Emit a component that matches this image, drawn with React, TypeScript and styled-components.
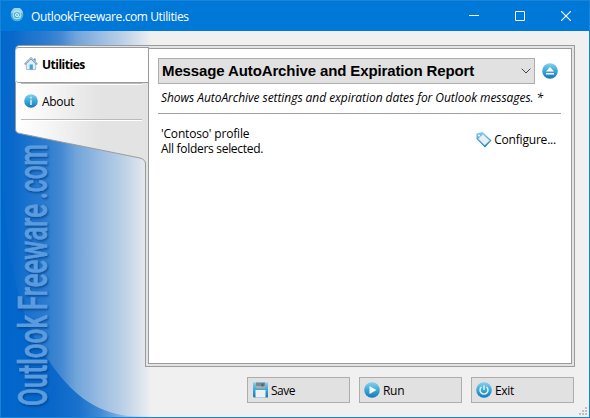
import React from "react";
import styled, { createGlobalStyle } from "styled-components";

const Global = createGlobalStyle`
  * { box-sizing: border-box; }
  body { margin: 0; background: #f0f0f0; font: 12px/15px "Open Sans", "Noto Sans", sans-serif; color: #000; }
`;

const Window = styled.div`
  position: relative;
  display: grid;
  grid-template-rows: 30px 1fr;
  width: 590px;
  height: 418px;
  border: 1px solid #1883d7;
  background: #f0f0f0;
  overflow: hidden;
`;

const TitleBar = styled.header`
  display: flex;
  align-items: center;
  background: #0078d7;
  color: #fff;
  padding-left: 9px;
  z-index: 1;
`;

const Label = styled.span<{ $track?: number; $bold?: boolean; $italic?: boolean }>`
  display: block;
  white-space: nowrap;
  letter-spacing: ${(p) => p.$track ?? 0}px;
  font-weight: ${(p) => (p.$bold ? 700 : 400)};
  font-style: ${(p) => (p.$italic ? "italic" : "normal")};
`;

const TitleText = styled(Label)`
  margin: 0 auto 0 7px;
`;

const CaptionButtons = styled.div`
  display: flex;
`;

const CaptionButton = styled.button`
  display: grid;
  place-items: center;
  width: 46px;
  height: 30px;
  padding: 0;
  border: 0;
  background: transparent;
`;

const Body = styled.div`
  display: grid;
  grid-template-rows: 322px 1fr;
  padding-top: 14px;
`;

const Main = styled.main`
  display: grid;
  grid-template-columns: 144px 430px;
`;

const Artwork = styled.svg`
  position: absolute;
  left: -1px;
  top: -1px;
  pointer-events: none;
`;

const Tabs = styled.nav`
  position: relative;
  padding: 2px 0 0 15px;
  z-index: 2;
`;

const Tab = styled.a<{ $active?: boolean }>`
  display: flex;
  align-items: center;
  gap: 4px;
  width: 133px;
  height: ${(p) => (p.$active ? 36 : 34)}px;
  padding: 0 0 2px 8px;
  border: solid #9b9b9b;
  border-width: ${(p) => (p.$active ? "1px 1px 1px 0" : "0")};
  border-radius: 3px 0 0 3px;
  background: ${(p) => (p.$active ? "#fff" : "transparent")};
`;

const TabDivider = styled.hr`
  width: 121px;
  height: 2px;
  margin: 0 0 0 5px;
  border: 0;
  background: linear-gradient(#bababa 50%, #fff 50%);
`;

const Panel = styled.section`
  position: relative;
  z-index: 1;
  border: 1px solid #9b9b9b;
  padding: 2px;
  background: #e3e3e3;
`;

const PanelInner = styled.div`
  height: 100%;
  border: 1px solid #9b9b9b;
  background: #fff;
  padding: 9px 9px 0;
`;

const TabPlate = styled(Artwork)`
  z-index: 1;
`;

const ReportRow = styled.div`
  display: flex;
  align-items: center;
  gap: 7px;
`;

const Combo = styled.div`
  display: flex;
  align-items: center;
  justify-content: space-between;
  width: 377px;
  height: 26px;
  padding: 0 3px;
  border: 1px solid #adadad;
  background: #e1e1e1;
  font: 15px/20px "Liberation Sans", Arial, sans-serif;
`;

const Description = styled.div`
  height: 29px;
  padding: 6px 0 0 3px;
`;

const Rule = styled.hr`
  width: 403px;
  height: 1px;
  margin: 0;
  border: 0;
  background: #a0a0a0;
`;

const Details = styled.div`
  display: flex;
  justify-content: space-between;
  padding: 12px 6px 0 3px;
`;

const Action = styled.a`
  display: flex;
  gap: 2px;
  height: 16px;
  margin-top: 6px;
`;

const Footer = styled.footer`
  display: flex;
  gap: 9px;
  padding: 10px 0 0 246px;
  z-index: 1;
`;

const PushButton = styled.button`
  display: flex;
  align-items: center;
  gap: 3px;
  width: 103px;
  height: 26px;
  padding: 0 0 0 4px;
  border: 1px solid #adadad;
  background: #e1e1e1;
  color: #000;
  font: inherit;
`;

const Grip = styled.svg`
  position: absolute;
  right: 1px;
  bottom: 1px;
`;

const BRAND = [
  { word: "Outlook", start: 406, length: 91 },
  { word: "Freeware", start: 310, length: 106 },
  { word: ".com", start: 199, length: 55 },
];

const Backdrop = () => (
  <Artwork width="590" height="418" viewBox="0 0 590 418">
    <defs>
      <linearGradient id="fade" gradientUnits="userSpaceOnUse" x1="0" x2="152" y1="0" y2="0">
        <stop offset="0" stopColor="#0366cb" />
        <stop offset=".09" stopColor="#0969cb" />
        <stop offset=".18" stopColor="#1a72ce" />
        <stop offset=".3" stopColor="#2b7bd0" />
        <stop offset=".4" stopColor="#4388d2" />
        <stop offset=".5" stopColor="#70a4da" />
        <stop offset=".66" stopColor="#9abce1" />
        <stop offset=".8" stopColor="#b9cfe6" />
        <stop offset=".95" stopColor="#e2e8ee" />
        <stop offset="1" stopColor="#f0f0f0" />
      </linearGradient>
      <linearGradient id="deep" gradientUnits="userSpaceOnUse" x1="0" x2="152" y1="0" y2="0">
        <stop offset="0" stopColor="#0066cc" />
        <stop offset=".35" stopColor="#0967ca" />
        <stop offset=".52" stopColor="#1b72cd" />
        <stop offset=".66" stopColor="#408ad3" />
        <stop offset=".82" stopColor="#91b8e0" />
        <stop offset="1" stopColor="#f0f0f0" />
      </linearGradient>
      <filter id="shade" x="-10%" y="-10%" width="120%" height="120%">
        <feDropShadow dx="1" dy="1.5" stdDeviation="1" floodColor="#003b80" floodOpacity=".75" />
      </filter>
    </defs>
    <rect x="1" y="31" width="151" height="386" fill="url(#fade)" />
    <path d="M1 150Q4 232 16 285C24 318 36 345 49 361C70 392 94 412 128 416H152V417H1Z" fill="url(#deep)" />
    <g
      filter="url(#shade)"
      fontFamily="Roboto, sans-serif"
      fontSize="41"
      fontWeight="500"
      fill="#5a9ce0"
      stroke="#5a9ce0"
      strokeWidth=".6"
    >
      {BRAND.map(({ word, start, length }) => (
        <text
          key={word}
          transform={`translate(46.500 ${start}) rotate(-90)`}
          textLength={length}
          lengthAdjust="spacingAndGlyphs"
        >
          {word}
        </text>
      ))}
    </g>
  </Artwork>
);

const TabShape = () => (
  <TabPlate width="590" height="418" viewBox="0 0 590 418">
    <defs>
      <linearGradient id="tabs" gradientUnits="userSpaceOnUse" x1="16" x2="100" y1="0" y2="0">
        <stop offset="0" stopColor="#fff" />
        <stop offset=".3" stopColor="#f8f8f8" />
        <stop offset="1" stopColor="#e3e3e3" />
      </linearGradient>
    </defs>
    <path
      d="M148 45.5H20Q15.500 45.500 15.500 50V129Q15.500 133 20 133.500L140 158Q145.500 159.500 145.500 164H148Z"
      fill="url(#tabs)"
    />
    <path
      d="M148 45.5H20Q15.500 45.500 15.500 50V129Q15.500 133 20 133.500L140 158Q145.500 159.500 145.500 164"
      fill="none"
      stroke="#9b9b9b"
    />
    <path d="M148.500 47V166" stroke="#9b9b9b" />
    <path d="M16 50V82" stroke="#a5d2f3" strokeWidth="2" />
  </TabPlate>
);

const BallGradient = ({ id }: { id: string }) => (
  <defs>
    <linearGradient id={id} x2="0" y2="1">
      <stop stopColor="#86d0ec" />
      <stop offset=".5" stopColor="#3ca7d8" />
      <stop offset="1" stopColor="#1478b5" />
    </linearGradient>
  </defs>
);

const Ball = ({ id, children, size = 16 }: { id: string; children: React.ReactNode; size?: number }) => (
  <svg width={size} height={size} viewBox="0 0 16 16" fill="none">
    <BallGradient id={id} />
    <circle cx="8" cy="8" r="7.800" fill={`url(#${id})`} />
    {children}
  </svg>
);

const AppIcon = () => (
  <svg width="14" height="16" viewBox="0 0 14 16" fill="none">
    <circle cx="7" cy="7" r="6.300" fill="#4fb3d6" />
    <path d="M1 5.500a6 6 0 0 1 12 0Q7 2.500 1 5.500" fill="#9bd6e6" />
    <circle cx="7" cy="7" r="3.900" stroke="#c3e6f0" />
    <circle cx="7" cy="7" r="1.500" stroke="#e0f3f8" />
    <path d="M8.600 6v2.500q1.500.8 2.300-1" stroke="#c3e6f0" />
  </svg>
);

const HomeIcon = () => (
  <svg width="14" height="14" viewBox="0.500 1 15 15">
    <path d="M3 8V14.500H13V8L8 3Z" fill="#e5edf3" stroke="#a6b6c2" />
    <path d="M11 2.500h2V6l-2-2Z" fill="#7895a8" />
    <path d="M1.300 9 8 2.300 14.700 9" fill="none" stroke="#7b9bb4" strokeWidth="1.800" />
    <path d="M2 8 8 2l6 6" fill="none" stroke="#b4cfe2" />
    <path d="M6.500 9h3.500v5.500H6.500Z" fill="#36a7dc" />
  </svg>
);

const TagIcon = () => (
  <svg width="16" height="16" viewBox="0 0 16 16">
    <BallGradient id="tag" />
    <path d="M.5 1.500 6.500 0 15.500 8.500 9 15.500.5 7Z" fill="url(#tag)" />
    <path d="M6.800 2.200 13.700 8.600 8.700 13.300 2.200 6.700Z" fill="#e8eef1" stroke="#b4c9d3" strokeWidth=".5" />
    <circle cx="3" cy="3.400" r="1" fill="#fff" />
  </svg>
);

const DiskIcon = () => (
  <svg width="16" height="16" viewBox="0 0 16 16">
    <BallGradient id="disk" />
    <path d="M1 .5H16V15.500H2L1 14.500Z" fill="url(#disk)" />
    <path d="M4 .5H13V6.500H4Z" fill="#738b96" />
    <path d="M4 4H13V6.500H4Z" fill="#a7adb0" />
    <path d="M9.500 1.500h2v3h-2Z" fill="#4a5d67" />
    <path d="M3.500 8H13.500V15.500H3.500Z" fill="#eef0f1" />
  </svg>
);

export default function App() {
  return (
    <>
      <Global />
      <Window>
        <Backdrop />
        <TitleBar>
          <AppIcon />
          <TitleText $track={-0.4}>OutlookFreeware.com Utilities</TitleText>
          <CaptionButtons>
            <CaptionButton aria-label="Minimize">
              <svg width="10" height="10"><path d="M0 4.500H10" stroke="#fff" /></svg>
            </CaptionButton>
            <CaptionButton aria-label="Maximize">
              <svg width="10" height="10"><path d="M.5.5h9v9h-9Z" fill="none" stroke="#fff" /></svg>
            </CaptionButton>
            <CaptionButton aria-label="Close">
              <svg width="10" height="10"><path d="m0 0 10 10M10 0 0 10" stroke="#fff" strokeWidth="1.100" /></svg>
            </CaptionButton>
          </CaptionButtons>
        </TitleBar>
        <Body>
          <Main>
            <Tabs>
              <Tab $active>
                <HomeIcon />
                <Label $bold $track={-0.5}>Utilities</Label>
              </Tab>
              <TabDivider />
              <Tab>
                <Ball id="info" size={14}>
                  <path d="M8 6.500v6M8 3.200v2" stroke="#d5eef9" strokeWidth="1.800" />
                </Ball>
                <Label $track={-0.3}>About</Label>
              </Tab>
              <TabDivider />
            </Tabs>
            <Panel>
              <PanelInner>
                <ReportRow>
                  <Combo>
                    <Label $bold $track={-0.12}>Message AutoArchive and Expiration Report</Label>
                    <svg width="10" height="6"><path d="m.7.7 4.300 4.300L9.300.7" fill="none" stroke="#444" /></svg>
                  </Combo>
                  <Ball id="eject">
                    <path d="m8 4 4 4.500H4ZM4 10h8v1.500H4Z" fill="#fff" />
                  </Ball>
                </ReportRow>
                <Description>
                  <Label $italic $track={-0.05}>Shows AutoArchive settings and expiration dates for Outlook messages. *</Label>
                </Description>
                <Rule />
                <Details>
                  <div>
                    <Label $track={-0.17}>'Contoso' profile</Label>
                    <Label $track={-0.3}>All folders selected.</Label>
                  </div>
                  <Action>
                    <TagIcon />
                    <Label $track={-0.2}>Configure...</Label>
                  </Action>
                </Details>
              </PanelInner>
            </Panel>
          </Main>
          <Footer>
            <PushButton>
              <DiskIcon />
              <Label $track={-0.5}>Save</Label>
            </PushButton>
            <PushButton>
              <Ball id="run">
                <path d="m5.500 4 7 4-7 4Z" fill="#f4fbfe" />
              </Ball>
              <Label $track={-0.3}>Run</Label>
            </PushButton>
            <PushButton>
              <Ball id="exit">
                <path d="M5.500 5a4 4 0 1 0 5 0M8 3.500V8" stroke="#e9f7fc" strokeWidth="1.400" />
              </Ball>
              <Label $track={-0.3}>Exit</Label>
            </PushButton>
          </Footer>
        </Body>
        <TabShape />
        <Grip width="9" height="9">
          <path d="M6 0h2v2H6ZM3 3h2v2H3ZM6 3h2v2H6ZM0 6h2v2H0ZM3 6h2v2H3ZM6 6h2v2H6Z" fill="#bfbfbf" />
        </Grip>
      </Window>
    </>
  );
}
